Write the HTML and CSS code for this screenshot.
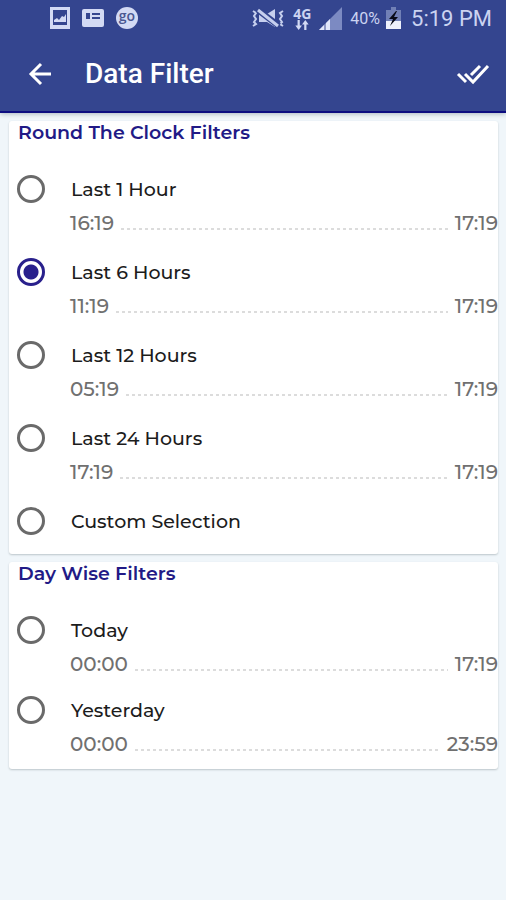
FILE: index.html
```html
<!DOCTYPE html>
<html lang="en">
<head>
<meta charset="utf-8">
<meta name="viewport" content="width=device-width, initial-scale=1">
<title>Data Filter</title>
<link rel="stylesheet" href="styles.css">
</head>
<body>
<header class="top">
  <div class="status">
    <div class="status-left">
      <svg width="20" height="22" viewBox="0 0 20 22"><path fill="#d3daf4" fill-rule="evenodd" d="M0 0h20v22H0zM3 3v15h14V3z"/><path fill="#d3daf4" d="M4 15v-2l3-2 2 2 3-4 2 1 2-3v8z"/></svg>
      <svg width="22" height="18" viewBox="0 0 22 18"><rect width="22" height="18" rx="2" fill="#d3daf4"/><path fill="#34458f" d="M4 4h4v6H4zM10 4h8v2h-8zM10 8h8v2h-8z"/></svg>
      <span class="go">go</span>
    </div>
    <div class="status-right">
      <svg width="34" height="22" viewBox="0 0 34 22" fill="none" stroke="#c6cfee" stroke-width="2"><path d="M2 4l3 2-2 3 2 3-2 3 2 2-3 2M32 4l-3 2 2 3-2 3 2 3-2 2 3 2"/><path fill="#c6cfee" stroke="none" d="M8 7h8l8-5v18l-8-5H8z"/><path stroke="#34458f" stroke-width="6" d="M7 3l21 16"/><path stroke-width="3" d="M7 3l20 16"/></svg>
      <span class="net"><span>4G</span><svg width="16" height="10" viewBox="0 0 14 9" fill="#d3daf4"><path d="M3 0h2v5h2L4 9 1 5h2zM9 9h2V4h2l-3-4-3 4h2z"/></svg></span>
      <svg class="signal" width="23" height="23" viewBox="0 0 23 23"><path fill="#7c8ac2" d="M23 0v23H0z"/><path fill="#e1e6fa" d="M11 12v11H0z"/><path stroke="#34458f" d="M6 14v9"/></svg>
      <span class="percent">40%</span>
      <svg class="battery" width="15" height="22" viewBox="0 0 15 22"><path fill="#7180b6" d="M5 0h5v3h5v11H0V3h5z"/><path fill="#eef1fc" d="M0 14h15v8H0z"/><path fill="#080b18" d="M10 4L3 12h4l-3 7 8-9H8l3-6z"/></svg>
      <time class="clock">5:19 PM</time>
    </div>
  </div>
  <div class="appbar">
    <button class="icon-button" type="button" aria-label="Back"><svg width="24" height="24" viewBox="0 0 24 24" fill="none" stroke="#fff" stroke-width="3"><path d="M23 12H3M13 2L3 12l10 10"/></svg></button>
    <h1>Data Filter</h1>
    <button class="icon-button" type="button" aria-label="Apply"><svg width="34" height="22" viewBox="0 0 34 22" fill="none" stroke="#fff" stroke-width="3"><path d="M2 11l8 8M9 11l8 8L32 3M15 12l9-9"/></svg></button>
  </div>
</header>
<main>
  <section class="card">
    <h2>Round The Clock Filters</h2>
    <div class="options">
      <div class="option"><input type="radio" name="range" id="h1"><label for="h1">Last 1 Hour</label><div class="span"><span>16:19</span><i class="dots"></i><span>17:19</span></div></div>
      <div class="option"><input type="radio" name="range" id="h6" checked><label for="h6">Last 6 Hours</label><div class="span"><span>11:19</span><i class="dots"></i><span>17:19</span></div></div>
      <div class="option"><input type="radio" name="range" id="h12"><label for="h12">Last 12 Hours</label><div class="span"><span>05:19</span><i class="dots"></i><span>17:19</span></div></div>
      <div class="option"><input type="radio" name="range" id="h24"><label for="h24">Last 24 Hours</label><div class="span"><span>17:19</span><i class="dots"></i><span>17:19</span></div></div>
      <div class="option single"><input type="radio" name="range" id="custom"><label for="custom">Custom Selection</label></div>
    </div>
  </section>
  <section class="card">
    <h2>Day Wise Filters</h2>
    <div class="options compact">
      <div class="option"><input type="radio" name="range" id="today"><label for="today">Today</label><div class="span"><span>00:00</span><i class="dots"></i><span>17:19</span></div></div>
      <div class="option"><input type="radio" name="range" id="yesterday"><label for="yesterday">Yesterday</label><div class="span"><span>00:00</span><i class="dots"></i><span>23:59</span></div></div>
    </div>
  </section>
</main>
</body>
</html>
```
FILE: styles.css
```css
* { box-sizing: border-box; }
body {
  margin: 0;
  min-height: 100vh;
  background: #f0f6fa;
  font-family: Montserrat, Inter, sans-serif;
}
svg { display: block; flex: none; }
h1, h2 { margin: 0; }
.top {
  background: #34458f;
  color: #fff;
  font-family: Roboto, sans-serif;
  border-bottom: 2px solid #0c0c80;
  box-shadow: 0 1px 5px #a9b5bd;
}
.status {
  display: flex;
  justify-content: space-between;
  align-items: center;
  height: 36px;
  padding: 0 14px 0 50px;
  color: #cbd3f1;
}
.status-left { display: flex; align-items: center; gap: 12px; }
.status-right { display: flex; align-items: center; }
.go {
  width: 22px;
  height: 22px;
  border-radius: 50%;
  background: #d3daf4;
  color: #4a5791;
  font: 600 14px/18px "Open Sans", sans-serif;
  text-align: center;
}
.net {
  display: flex;
  flex-direction: column;
  align-items: center;
  margin: 0 8px;
  font: bold 14px/13px "Open Sans", sans-serif;
}
.percent { margin-left: 8px; font-size: 16px; }
.battery { margin: 0 10px 0 6px; }
.clock { font-size: 22px; }
.appbar {
  display: flex;
  align-items: center;
  height: 75px;
  padding: 0 16px 0 28px;
}
.appbar h1 {
  flex: 1;
  margin-left: 33px;
  font-size: 28px;
  line-height: 38px;
  font-weight: 500;
}
.icon-button { padding: 0; border: 0; background: none; }
main {
  display: flex;
  flex-direction: column;
  gap: 8px;
  padding: 8px 8px 8px 9px;
}
.card {
  padding-bottom: 8px;
  background: #fff;
  border-radius: 3px;
  box-shadow: 0 1px 2px #bcc5ca;
}
.card h2 {
  padding-left: 9px;
  font-size: 19px;
  line-height: 24px;
  font-weight: 600;
  color: #221a86;
}
.options {
  display: flex;
  flex-direction: column;
  gap: 15px;
  padding: 27px 0 0 8px;
}
.compact { gap: 12px; }
.option {
  display: grid;
  grid-template-columns: 53px 1fr;
  grid-auto-rows: 34px;
  align-items: center;
}
.single { margin-bottom: 8px; }
.option input {
  appearance: none;
  width: 28px;
  height: 28px;
  margin: 0;
  border: 3px solid #6a6a6a;
  border-radius: 50%;
}
.option input:checked {
  border-color: #29208c;
  background: radial-gradient(circle, #29208c 7px, #fff 8px);
}
.option label {
  padding-left: 1px;
  font-size: 19px;
  font-weight: 500;
  color: #1c1c1c;
}
.span {
  grid-column: 2;
  display: flex;
  align-items: center;
  gap: 7px;
  font-size: 20px;
  font-weight: 500;
  color: #707070;
}
.dots {
  flex: 1;
  height: 2px;
  margin-top: 12px;
  background: repeating-linear-gradient(90deg, #dcdcdc 0 3px, #fff 3px 6px);
}
```
